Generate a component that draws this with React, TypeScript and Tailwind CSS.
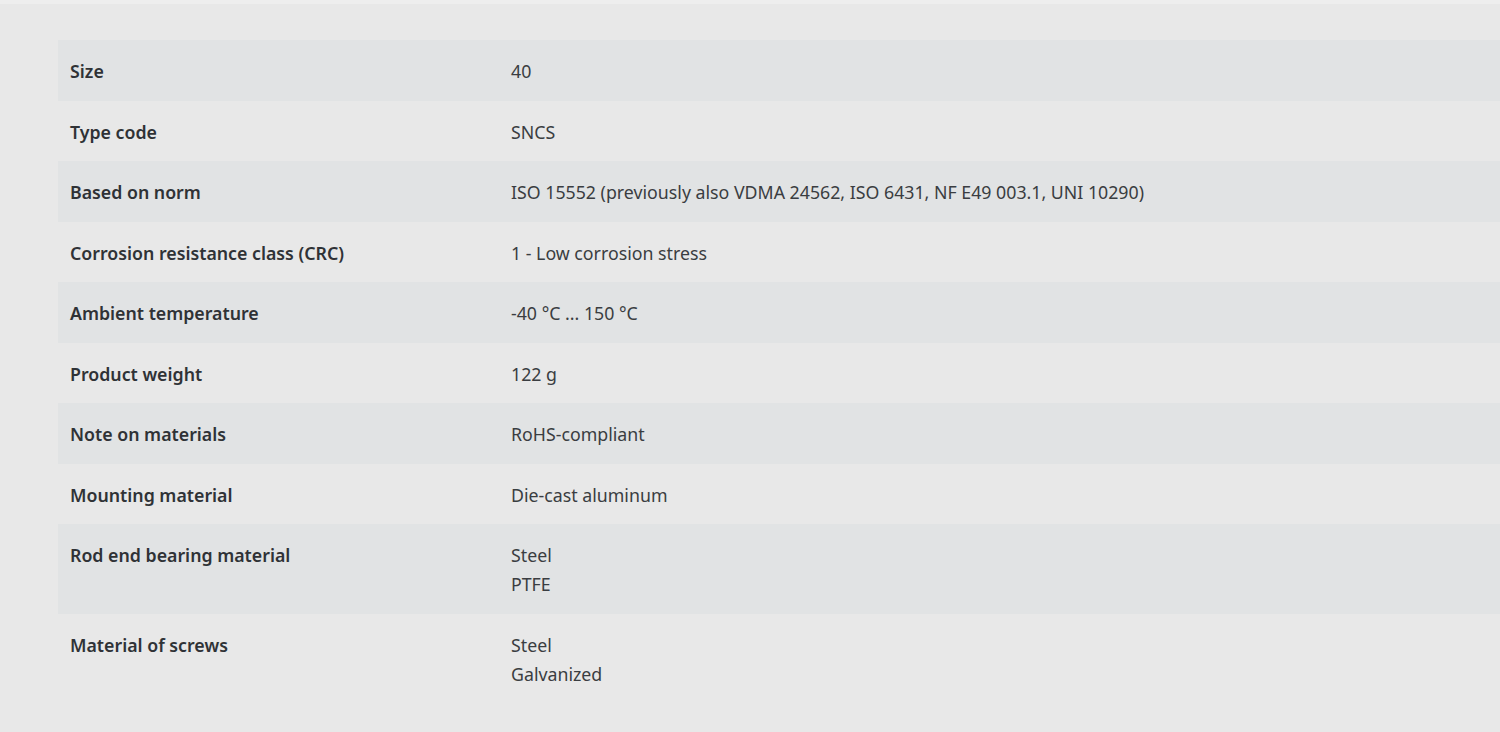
const rows: { label: string; values: string[] }[] = [
  { label: 'Size', values: ['40'] },
  { label: 'Type code', values: ['SNCS'] },
  {
    label: 'Based on norm',
    values: ['ISO 15552 (previously also VDMA 24562, ISO 6431, NF E49 003.1, UNI 10290)'],
  },
  { label: 'Corrosion resistance class (CRC)', values: ['1 - Low corrosion stress'] },
  { label: 'Ambient temperature', values: ['-40 °C ... 150 °C'] },
  { label: 'Product weight', values: ['122 g'] },
  { label: 'Note on materials', values: ['RoHS-compliant'] },
  { label: 'Mounting material', values: ['Die-cast aluminum'] },
  { label: 'Rod end bearing material', values: ['Steel', 'PTFE'] },
  { label: 'Material of screws', values: ['Steel', 'Galvanized'] },
]

export default function App() {
  return (
    <div className="min-h-[732px] bg-[#e8e8e8] font-['Noto_Sans',sans-serif] text-[17.75px]">
      <div className="h-1 bg-[#eeeeee]" />
      <div className="pl-[58px] pt-9">
        {rows.map((row, i) => (
          <div
            key={row.label}
            className={`flex px-3 pt-[17px] pb-[14.5px] leading-[29px] ${
              i % 2 === 0 ? 'bg-[#e1e3e4]' : 'bg-[#e8e8e8]'
            }`}
          >
            <div className="w-[441px] shrink-0 font-semibold text-[#2f3236]">{row.label}</div>
            <div className="text-[#3a3d41]">
              {row.values.map((v) => (
                <div key={v}>{v}</div>
              ))}
            </div>
          </div>
        ))}
      </div>
    </div>
  )
}
